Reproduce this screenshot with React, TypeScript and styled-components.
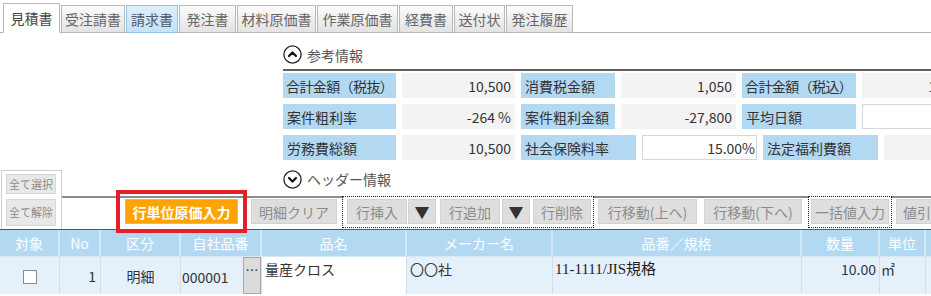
import React from "react";
import styled, { createGlobalStyle, css } from "styled-components";

const GlobalStyle = createGlobalStyle`
  html, body { margin: 0; padding: 0; background: #fff; }
  body {
    width: 931px; height: 296px; overflow: hidden;
    font-family: "Noto Sans CJK JP", "Noto Sans", sans-serif;
    color: #333;
  }
  * { box-sizing: border-box; }
`;

const Page = styled.div`
  width: 931px;
  height: 296px;
  overflow: hidden;
`;

/* ---------- Tabs ---------- */
const TabBar = styled.div`
  display: flex;
  align-items: flex-end;
  gap: 1px;
  height: 33px;
  padding-left: 3px;
  border-bottom: 1px solid #b4b4b4;
`;

const Tab = styled.div<{ $w: number; $active?: boolean; $hl?: boolean }>`
  flex: 0 0 ${(p) => p.$w}px;
  height: 28px;
  margin-bottom: -1px;
  display: flex;
  align-items: center;
  justify-content: center;
  font-size: 14px;
  line-height: 1;
  color: #666;
  border: 1px solid #b8b8b8;
  background: linear-gradient(#fbfbfb, #e3e3e3);
  ${(p) =>
    p.$hl &&
    css`
      background: linear-gradient(#dcf0fc, #c4e3f7);
      border-color: #8fc4e8;
      color: #556;
    `}
  ${(p) =>
    p.$active &&
    css`
      height: 30px;
      background: #fff;
      border-bottom-color: #fff;
      color: #444;
    `}
`;

/* ---------- Info section ---------- */
const Info = styled.section`
  margin-left: 283px;
  padding-top: 7px;
`;

const SectionTitle = styled.div`
  display: flex;
  align-items: center;
  gap: 5px;
  height: 31px;
  border-bottom: 2px solid #5e5e5e;
  font-size: 14px;
  line-height: 18px;
  color: #555;
`;

const InfoRows = styled.div`
  display: flex;
  flex-direction: column;
  gap: 6px;
  margin-top: 2px;
`;

const InfoRow = styled.div`
  display: flex;
  gap: 6px;
  height: 25px;
`;

const Label = styled.div<{ $w: number; $tight?: boolean }>`
  flex: 0 0 ${(p) => p.$w}px;
  display: flex;
  align-items: center;
  padding-left: ${(p) => (p.$tight ? 3 : 4)}px;
  background: #b3d8f1;
  font-size: 14px;
  line-height: 18px;
  color: #333;
  white-space: nowrap;
  letter-spacing: ${(p) => (p.$tight ? "-0.6px" : "0")};
`;

const Value = styled.div<{ $w: number; $input?: boolean }>`
  flex: 0 0 ${(p) => p.$w}px;
  display: flex;
  align-items: center;
  justify-content: flex-end;
  padding-right: 4px;
  background: #f3f3f3;
  font-size: 14px;
  line-height: 18px;
  color: #333;
  white-space: nowrap;
  ${(p) =>
    p.$input &&
    css`
      background: #fff;
      border: 1px solid #d5d5e2;
      padding-right: 1px;
    `}
`;

/* ---------- Toolbar area ---------- */
const ToolArea = styled.div`
  display: flex;
  height: 59px;
  margin-top: 10px;
`;

const SelectBox = styled.div`
  flex: 0 0 61px;
  margin-left: 1px;
  display: flex;
  flex-direction: column;
  gap: 5px;
  padding: 3px 5px 0 4px;
  border: 1px solid #cfcfcf;
  border-bottom: none;
`;

const SmallBtn = styled.div<{ $h: number }>`
  height: ${(p) => p.$h}px;
  display: flex;
  align-items: center;
  justify-content: center;
  background: #e8e8e8;
  border: 1px solid #d6d6d6;
  font-size: 11px;
  color: #8a8a8a;
  line-height: 1;
`;

const ToolRight = styled.div`
  flex: 1;
  display: flex;
  flex-direction: column;
`;

const HeaderTitle = styled.div`
  height: 26px;
  padding-left: 221px;
  display: flex;
  align-items: flex-start;
  gap: 5px;
  font-size: 14px;
  line-height: 19px;
  color: #555;
`;

const Toolbar = styled.div`
  display: flex;
  align-items: flex-start;
  height: 33px;
  padding-top: 1px;
  border-top: 2px solid #8c8c8c;
  white-space: nowrap;
`;

const Highlight = styled.div<{ $ml: number }>`
  position: relative;
  z-index: 2;
  margin-left: ${(p) => p.$ml}px;
  outline: 4px solid #e41f2a;
  outline-offset: 5px;
  display: flex;
`;

const OrangeBtn = styled.div`
  width: 113px;
  height: 25px;
  display: flex;
  align-items: center;
  justify-content: center;
  background: #ffa305;
  border: 1px solid #f4b552;
  color: #fff;
  font-weight: bold;
  font-size: 14px;
  line-height: 1;
`;

const Btn = styled.div<{ $w: number; $ml?: number; $dark?: boolean; $start?: boolean }>`
  flex: 0 0 ${(p) => p.$w}px;
  margin-left: ${(p) => p.$ml ?? 0}px;
  height: 25px;
  display: flex;
  align-items: center;
  justify-content: ${(p) => (p.$start ? "flex-start" : "center")};
  padding-left: ${(p) => (p.$start ? 6 : 0)}px;
  background: #dedede;
  border: 1px solid #d2d2d2;
  color: #8c8c8c;
  font-size: 14px;
  line-height: 1;
  overflow: hidden;
  ${(p) =>
    p.$dark &&
    css`
      color: #333;
      font-size: 15px;
    `}
`;

const DotGroup = styled.div<{ $ml: number }>`
  display: flex;
  margin-left: ${(p) => p.$ml}px;
  margin-top: -3px;
  height: 32px;
  padding: 2px 2px 0 4px;
  border: 1px dotted #222;
  background: #fff;
`;

/* ---------- Table ---------- */
const COLS = "60px 41px 80px 81px 145px 146px 249px 78px 46px 60px";

const Table = styled.div`
  border-top: 1px solid #555;
`;

const HeadRow = styled.div`
  display: grid;
  grid-template-columns: ${COLS};
  height: 27px;
  background: #b3d8f1;
  border-bottom: 1px solid #d6e8f4;
`;

const HeadCell = styled.div`
  display: flex;
  align-items: center;
  justify-content: center;
  border-right: 2px solid #d3e7f4;
  color: #fff;
  font-size: 14px;
  line-height: 18px;
  white-space: nowrap;
`;

const BodyRow = styled.div`
  display: grid;
  grid-template-columns: ${COLS};
  height: 37px;
  background: #e4f1fb;
`;

const Cell = styled.div<{
  $align?: "left" | "center" | "right";
  $top?: boolean;
  $white?: boolean;
  $pad?: number;
  $color?: string;
  $serif?: boolean;
}>`
  display: flex;
  align-items: ${(p) => (p.$top ? "flex-start" : "center")};
  justify-content: ${(p) =>
    p.$align === "center" ? "center" : p.$align === "right" ? "flex-end" : "flex-start"};
  padding: ${(p) => (p.$top ? 3 : 0)}px ${(p) => (p.$align === "right" ? p.$pad ?? 4 : 0)}px 0
    ${(p) => (p.$align === "right" ? 0 : p.$pad ?? 0)}px;
  border-right: 1px solid #d2dfea;
  background: ${(p) => (p.$white ? "#fff" : "transparent")};
  color: ${(p) => p.$color ?? "#333"};
  font-size: ${(p) => (p.$serif ? 15 : 14)}px;
  line-height: 18px;
  white-space: nowrap;
  ${(p) =>
    p.$serif &&
    css`
      font-family: "Liberation Serif", "Noto Sans CJK JP", serif;
    `}
`;

const CodeCell = styled.div`
  display: flex;
  align-items: stretch;
  padding-left: 1px;
  border-right: 1px solid #d2dfea;
  font-size: 14px;
  line-height: 18px;
  color: #333;
`;

const CodeText = styled.span`
  flex: 1;
  display: flex;
  align-items: center;
  padding-top: 3px;
`;

const DotsBtn = styled.div`
  flex: 0 0 18px;
  display: flex;
  justify-content: center;
  padding-top: 3px;
  background: #dcdcdc;
  border: 1px solid #a8a8a8;
  font-size: 13px;
  color: #333;
`;

const CheckBox = styled.span`
  width: 14px;
  height: 14px;
  margin-top: 2px;
  border: 1px solid #8a8a8a;
  background: #fff;
`;

const CircleIcon = ({ up }: { up?: boolean }) => (
  <svg width="19" height="19" viewBox="0 0 19 19" style={{ flex: "0 0 19px" }}>
    <circle cx="9.5" cy="9.5" r="8.6" fill="#fff" stroke="#222" strokeWidth="1.3" />
    <path
      d={up ? "M6 11 L9.5 7.5 L13 11" : "M6 8 L9.5 11.5 L13 8"}
      fill="none"
      stroke="#111"
      strokeWidth="2.2"
      strokeLinecap="round"
      strokeLinejoin="round"
    />
  </svg>
);

const tabs: { t: string; w: number; active?: boolean; hl?: boolean }[] = [
  { t: "見積書", w: 57, active: true },
  { t: "受注請書", w: 64 },
  { t: "請求書", w: 52, hl: true },
  { t: "発注書", w: 57 },
  { t: "材料原価書", w: 79 },
  { t: "作業原価書", w: 81 },
  { t: "経費書", w: 54 },
  { t: "送付状", w: 51 },
  { t: "発注履歴", w: 67 },
];

const heads = ["対象", "No", "区分", "自社品番", "品名", "メーカー名", "品番／規格", "数量", "単位", ""];

export default function App() {
  return (
    <Page>
      <GlobalStyle />
      <TabBar>
        {tabs.map((t) => (
          <Tab key={t.t} $w={t.w} $active={t.active} $hl={t.hl}>
            {t.t}
          </Tab>
        ))}
      </TabBar>

      <Info>
        <SectionTitle>
          <CircleIcon up />
          参考情報
        </SectionTitle>
        <InfoRows>
          <InfoRow>
            <Label $w={113} $tight>
              合計金額（税抜）
            </Label>
            <Value $w={113}>10,500</Value>
            <Label $w={94}>消費税金額</Label>
            <Value $w={115}>1,050</Value>
            <Label $w={114} $tight>
              合計金額（税込）
            </Label>
            <Value $w={113}>11,550</Value>
          </InfoRow>
          <InfoRow>
            <Label $w={113}>案件粗利率</Label>
            <Value $w={113}>-264 %</Value>
            <Label $w={94}>案件粗利金額</Label>
            <Value $w={115}>-27,800</Value>
            <Label $w={114}>平均日額</Label>
            <Value $w={113} $input>
              2,100
            </Value>
          </InfoRow>
          <InfoRow>
            <Label $w={113}>労務費総額</Label>
            <Value $w={113}>10,500</Value>
            <Label $w={115}>社会保険料率</Label>
            <Value $w={115} $input>
              15.00%
            </Value>
            <Label $w={115}>法定福利費額</Label>
            <Value $w={113}>1,575</Value>
          </InfoRow>
        </InfoRows>
      </Info>

      <ToolArea>
        <SelectBox>
          <SmallBtn $h={20}>全て選択</SmallBtn>
          <SmallBtn $h={27}>全て解除</SmallBtn>
        </SelectBox>
        <ToolRight>
          <HeaderTitle>
            <CircleIcon />
            ヘッダー情報
          </HeaderTitle>
          <Toolbar>
            <Highlight $ml={63}>
              <OrangeBtn>行単位原価入力</OrangeBtn>
            </Highlight>
            <Btn $w={86} $ml={13}>
              明細クリア
            </Btn>
            <DotGroup $ml={5}>
              <Btn $w={60}>行挿入</Btn>
              <Btn $w={28} $ml={1} $dark>
                ▼
              </Btn>
              <Btn $w={60} $ml={4}>
                行追加
              </Btn>
              <Btn $w={28} $ml={2} $dark>
                ▼
              </Btn>
              <Btn $w={58} $ml={3}>
                行削除
              </Btn>
            </DotGroup>
            <Btn $w={99} $ml={4}>
              行移動(上へ)
            </Btn>
            <Btn $w={98} $ml={7}>
              行移動(下へ)
            </Btn>
            <DotGroup $ml={6}>
              <Btn $w={78} $ml={-2}>
                一括値入力
              </Btn>
            </DotGroup>
            <Btn $w={70} $ml={4} $start>
              値引入力
            </Btn>
          </Toolbar>
        </ToolRight>
      </ToolArea>

      <Table>
        <HeadRow>
          {heads.map((h, i) => (
            <HeadCell key={i}>{h}</HeadCell>
          ))}
        </HeadRow>
        <BodyRow>
          <Cell $align="center">
            <CheckBox />
          </Cell>
          <Cell $align="right" $pad={4}>
            1
          </Cell>
          <Cell $align="center">明細</Cell>
          <CodeCell>
            <CodeText>000001</CodeText>
            <DotsBtn>…</DotsBtn>
          </CodeCell>
          <Cell $top $white $pad={3}>
            量産クロス
          </Cell>
          <Cell $top $pad={3}>
            〇〇社
          </Cell>
          <Cell $top $pad={2} $serif $color="#2a1a1a">
            11-1111/JIS規格
          </Cell>
          <Cell $top $align="right" $pad={3} $color="#333350">
            10.00
          </Cell>
          <Cell $top $pad={1}>
            ㎡
          </Cell>
          <Cell />
        </BodyRow>
      </Table>
    </Page>
  );
}
